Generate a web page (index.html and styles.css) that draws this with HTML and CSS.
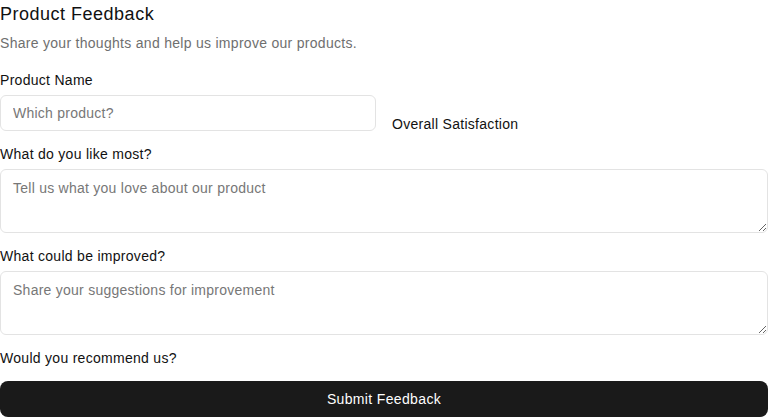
FILE: index.html
```html
<!DOCTYPE html>
<html lang="en">
<head>
<meta charset="utf-8">
<title>Product Feedback</title>
<link rel="stylesheet" href="styles.css">
</head>
<body>
<div class="page">
  <header class="header">
    <h1 class="title">Product Feedback</h1>
    <p class="subtitle">Share your thoughts and help us improve our products.</p>
  </header>
  <form class="form">
    <div class="row">
      <div class="field">
        <label class="label" for="product">Product Name</label>
        <input class="input" id="product" type="text" placeholder="Which product?">
      </div>
      <div class="field field-end">
        <span class="label label-end">Overall Satisfaction</span>
      </div>
    </div>
    <div class="field">
      <label class="label" for="like">What do you like most?</label>
      <textarea class="textarea" id="like" placeholder="Tell us what you love about our product"></textarea>
    </div>
    <div class="field">
      <label class="label" for="improve">What could be improved?</label>
      <textarea class="textarea" id="improve" placeholder="Share your suggestions for improvement"></textarea>
    </div>
    <div class="field">
      <span class="label">Would you recommend us?</span>
    </div>
    <button class="submit" type="button">Submit Feedback</button>
  </form>
</div>
</body>
</html>
```
FILE: styles.css
```css
* { box-sizing: border-box; }
html, body { margin: 0; padding: 0; background: #ffffff; }
body {
  font-family: "Liberation Sans", Arial, Helvetica, sans-serif;
  color: #111111;
  letter-spacing: 0.018em;
}
.page { width: 768px; }
.title {
  margin: 0;
  font-size: 18px;
  font-weight: 400;
  line-height: 28px;
  letter-spacing: 0.028em;
  color: #111111;
}
.subtitle {
  margin: 5px 0 0;
  font-size: 14px;
  line-height: 20px;
  color: #6f6f6f;
}
.form {
  margin-top: 17px;
  display: flex;
  flex-direction: column;
  gap: 13px;
}
.row {
  display: grid;
  grid-template-columns: 376px 376px;
  column-gap: 16px;
}
.field {
  display: flex;
  flex-direction: column;
  gap: 5px;
}
.field-end { justify-content: flex-end; }
.label {
  font-size: 14px;
  line-height: 20px;
  color: #111111;
}
.label-end { line-height: 16px; margin-bottom: -1px; }
.input, .textarea {
  width: 100%;
  font-family: "Liberation Sans", Arial, Helvetica, sans-serif;
  font-size: 14px;
  letter-spacing: 0.018em;
  color: #111111;
  border: 1px solid #e3e3e3;
  border-radius: 6px;
  background: #ffffff;
  outline: none;
}
.input {
  height: 36px;
  padding: 0 12px;
}
.textarea {
  height: 64px;
  padding: 10px 12px;
  line-height: 16px;
  resize: vertical;
  display: block;
}
.input::placeholder, .textarea::placeholder { color: #777777; }
.submit {
  margin-top: 0;
  width: 100%;
  height: 36px;
  border: none;
  border-radius: 8px;
  background: #1a1a1a;
  color: #ffffff;
  font-family: "Liberation Sans", Arial, Helvetica, sans-serif;
  font-size: 14px;
  letter-spacing: 0.025em;
  cursor: pointer;
}
```
